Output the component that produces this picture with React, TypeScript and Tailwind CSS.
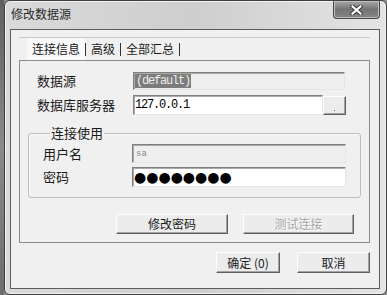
import React from 'react';

function Btn({ children, disabled, className }: { children: React.ReactNode; disabled?: boolean; className?: string }) {
  return (
    <div
      className={`flex items-center justify-center bg-[#ececec] border border-t-[#fdfdfd] border-l-[#fdfdfd] border-r-[#5e5e5e] border-b-[#5e5e5e] shadow-[inset_-1px_-1px_0_#a3a3a3] text-[12px] leading-[16px] ${
        disabled ? 'text-[#a6a6a6] [text-shadow:1px_1px_0_#ffffff]' : 'text-[#1a1a1a]'
      } ${className ?? ''}`}
    >
      {children}
    </div>
  );
}

const sunken =
  'border border-t-[#808080] border-l-[#808080] border-r-[#e6e6e6] border-b-[#e6e6e6] shadow-[inset_1px_1px_0_#a9a9a9]';

export default function App() {
  return (
    <div className="w-[387px] h-[295px] flex bg-[#8c8c8c] overflow-hidden font-['Noto_Sans_CJK_SC',sans-serif] text-[#1a1a1a]">
      <div className="w-[4px] bg-gradient-to-b from-[#5f5f5f] via-[#8a8a8a] to-[#6d6d6d]" />

      {/* Window frame */}
      <div className="flex-1 flex flex-col border border-[#3f3f3f] rounded-[6px] bg-gradient-to-r from-[#dadada] via-[#cecece] to-[#e4e4e4] pl-[5px] pr-[6px] pb-[5px] shadow-[inset_0_0_0_1px_#f2f2f2]">
        {/* Title bar */}
        <div className="h-[28px] flex items-start">
          <span className="mt-[5px] ml-[1px] text-[12px] leading-[16px] text-[#2a2a2a]">修改数据源</span>
          <div className="ml-auto w-[47px] h-[18px] rounded-b-[4px] rounded-t-[1px] border border-[#464646] border-t-0 bg-gradient-to-b from-[#a8a8a8] via-[#747474] to-[#868686] shadow-[inset_0_0_0_1px_#bdbdbd] flex items-center justify-center">
            <svg width="13" height="10" viewBox="0 0 13 10">
              <path d="M2.5 1.5 L10.5 8.5 M10.5 1.5 L2.5 8.5" stroke="#3a3a3a" strokeWidth="4.2" strokeLinecap="square" />
              <path d="M2.5 1.5 L10.5 8.5 M10.5 1.5 L2.5 8.5" stroke="#ffffff" strokeWidth="2.2" strokeLinecap="square" />
            </svg>
          </div>
        </div>

        {/* Client area */}
        <div className="flex-1 flex flex-col border border-[#5c5c5c] bg-[#f0f0f0] pt-[7px] pl-[8px] pr-[9px]">
          {/* Tabs */}
          <div className="h-[23px] flex items-stretch border-t border-[#cacaca] pl-[8px] text-[12px] leading-[16px]">
            <div className="flex items-center px-[5px] bg-[#f9f9f9]">连接信息</div>
            <div className="flex items-center">
              <span className="w-px h-[13px] bg-[#333]" />
              <span className="pl-[5px] pr-[5px]">高级</span>
              <span className="w-px h-[13px] bg-[#333]" />
              <span className="pl-[5px] pr-[5px]">全部汇总</span>
              <span className="w-px h-[13px] bg-[#333]" />
            </div>
          </div>

          {/* Tab panel */}
          <div className="border border-[#8a8a8a] flex flex-col pb-[8px] text-[13px] leading-[16px]">
            <div className="mt-[11px] flex items-center">
              <span className="w-[113px] pl-[17px]">数据源</span>
              <div className={`w-[212px] h-[18px] bg-[#efefef] ${sunken} flex items-center pl-[1px]`}>
                <span className="bg-[#7c7c7c] text-[#ececec] font-['Liberation_Mono',monospace] text-[12px] tracking-[-1.2px] leading-[14px] px-[1px]">
                  (default)
                </span>
              </div>
            </div>
            <div className="mt-[5px] flex items-center">
              <span className="w-[113px] pl-[17px]">数据库服务器</span>
              <div className={`w-[190px] h-[20px] bg-white ${sunken} flex items-center pl-[1px]`}>
                <span className="font-['Liberation_Mono',monospace] text-[12px] tracking-[-1.2px] leading-[14px] text-black">
                  127.0.0.1
                </span>
              </div>
              <div className="w-[23px] h-[19px] bg-[#ececec] border border-t-[#fdfdfd] border-l-[#fdfdfd] border-r-[#5e5e5e] border-b-[#5e5e5e] shadow-[inset_-1px_-1px_0_#a3a3a3] flex items-end justify-center pb-[3px]">
                <span className="w-px h-px bg-[#555]" />
              </div>
            </div>

            <fieldset className="mt-[10px] mx-[8px] border border-[#bdbdbd] rounded-[3px] pl-[14px] pr-[14px] pb-[10px] shadow-[inset_1px_1px_0_#fafafa]">
              <legend className="ml-[7px] px-[1px]">连接使用</legend>
              <div className="mt-[3px] flex items-center">
                <span className="w-[89px]">用户名</span>
                <div className={`flex-1 h-[19px] bg-[#efefef] ${sunken} flex items-center pl-[3px]`}>
                  <span className="font-['Liberation_Mono',monospace] text-[9px] leading-[10px] text-[#8a8a8a]">sa</span>
                </div>
              </div>
              <div className="mt-[4px] flex items-center">
                <span className="w-[89px]">密码</span>
                <div className={`flex-1 h-[20px] bg-white ${sunken} flex items-center pl-[1px]`}>
                  <span className="font-['DejaVu_Sans',sans-serif] text-[14px] leading-[16px] text-black">●●●●●●●●</span>
                </div>
              </div>
            </fieldset>

            <div className="mt-[16px] flex justify-end gap-[15px] pr-[15px]">
              <Btn className="w-[112px] h-[20px]">修改密码</Btn>
              <Btn disabled className="w-[111px] h-[20px]">测试连接</Btn>
            </div>
          </div>

          {/* Dialog buttons */}
          <div className="mt-[9px] flex justify-end gap-[17px]">
            <Btn className="w-[64px] h-[21px]">确定 (0)</Btn>
            <Btn className="w-[73px] h-[21px]">取消</Btn>
          </div>
        </div>
      </div>
    </div>
  );
}
